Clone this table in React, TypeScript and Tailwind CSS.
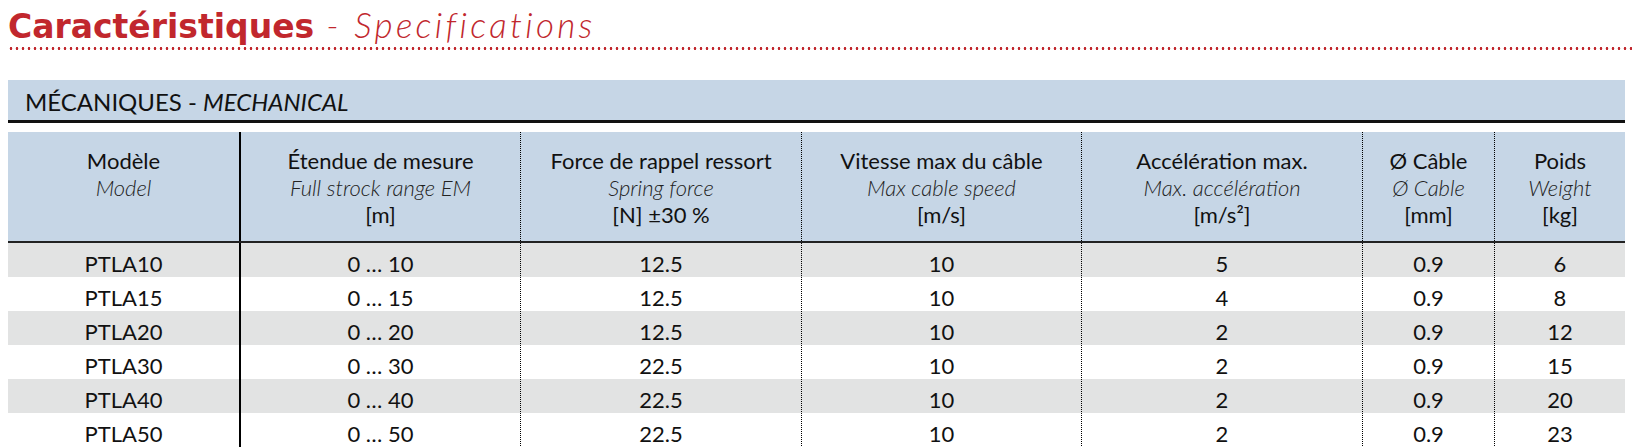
const COLS = [
  { fr: "Modèle", en: "Model", unit: "" },
  { fr: "Étendue de mesure", en: "Full strock range EM", unit: "[m]" },
  { fr: "Force de rappel ressort", en: "Spring force", unit: "[N] ±30 %" },
  { fr: "Vitesse max du câble", en: "Max cable speed", unit: "[m/s]" },
  { fr: "Accélération max.", en: "Max. accélération", unit: "[m/s²]" },
  { fr: "Ø Câble", en: "Ø Cable", unit: "[mm]" },
  { fr: "Poids", en: "Weight", unit: "[kg]" },
];

const ROWS = [
  ["PTLA10", "0 … 10", "12.5", "10", "5", "0.9", "6"],
  ["PTLA15", "0 … 15", "12.5", "10", "4", "0.9", "8"],
  ["PTLA20", "0 … 20", "12.5", "10", "2", "0.9", "12"],
  ["PTLA30", "0 … 30", "22.5", "10", "2", "0.9", "15"],
  ["PTLA40", "0 … 40", "22.5", "10", "2", "0.9", "20"],
  ["PTLA50", "0 … 50", "22.5", "10", "2", "0.9", "23"],
];

const GRID = "grid grid-cols-[231px_281px_281px_280px_281px_132px_131px]";

// first column has no rule, second a solid one, the rest dotted
const divider = (i: number) =>
  i === 0 ? "" : i === 1 ? "border-l-2 border-black" : "border-l border-dotted border-black";

export default function App() {
  return (
    <div className="w-[1632px] h-[447px] overflow-hidden bg-white font-['Lato',sans-serif] text-[#111]">
      {/* Title */}
      <div className="pl-2 pt-1 h-[44px] leading-[40px] text-[#c1272d] whitespace-nowrap">
        <span className="font-bold text-[33px] font-['DejaVu_Sans',sans-serif]">Caractéristiques</span>
        <span className="font-light italic text-[35px] tracking-[3.3px] font-['Lato',sans-serif]">{" "}- Specifications</span>
      </div>
      <div className="ml-2 mt-[3px] h-[3px] bg-[radial-gradient(circle,#c1272d_1.1px,transparent_1.6px)] bg-size-[6px_3px]" />

      <div className="ml-2 w-[1617px] mt-[30px]">
        {/* Section band */}
        <div className="h-[40px] bg-[#c6d6e6] pl-[17px] pt-[8px] text-[24px] leading-[28px] whitespace-nowrap">
          MÉCANIQUES - <span className="italic">MECHANICAL</span>
        </div>
        <div className="h-[3px] bg-[#111]" />

        {/* Column headers */}
        <div className={`${GRID} mt-[9px] h-[111px] bg-[#c6d6e6] border-b-2 border-[#222]`}>
          {COLS.map((c, i) => (
            <div
              key={c.fr}
              className={`${divider(i)} flex flex-col items-center pt-[15px] text-[22px] leading-[27px] whitespace-nowrap`}
            >
              <span>{c.fr}</span>
              <span className="italic font-light text-[#222]">{c.en}</span>
              {c.unit && <span>{c.unit}</span>}
            </div>
          ))}
        </div>

        {/* Rows */}
        {ROWS.map((r, ri) => (
          <div key={r[0]} className={`${GRID} h-[34px] ${ri % 2 === 0 ? "bg-[#e2e3e3]" : "bg-white"}`}>
            {r.map((v, i) => (
              <div key={i} className={`${divider(i)} text-center pt-[7px] text-[22px] leading-[28px]`}>
                {v}
              </div>
            ))}
          </div>
        ))}
      </div>
    </div>
  );
}
